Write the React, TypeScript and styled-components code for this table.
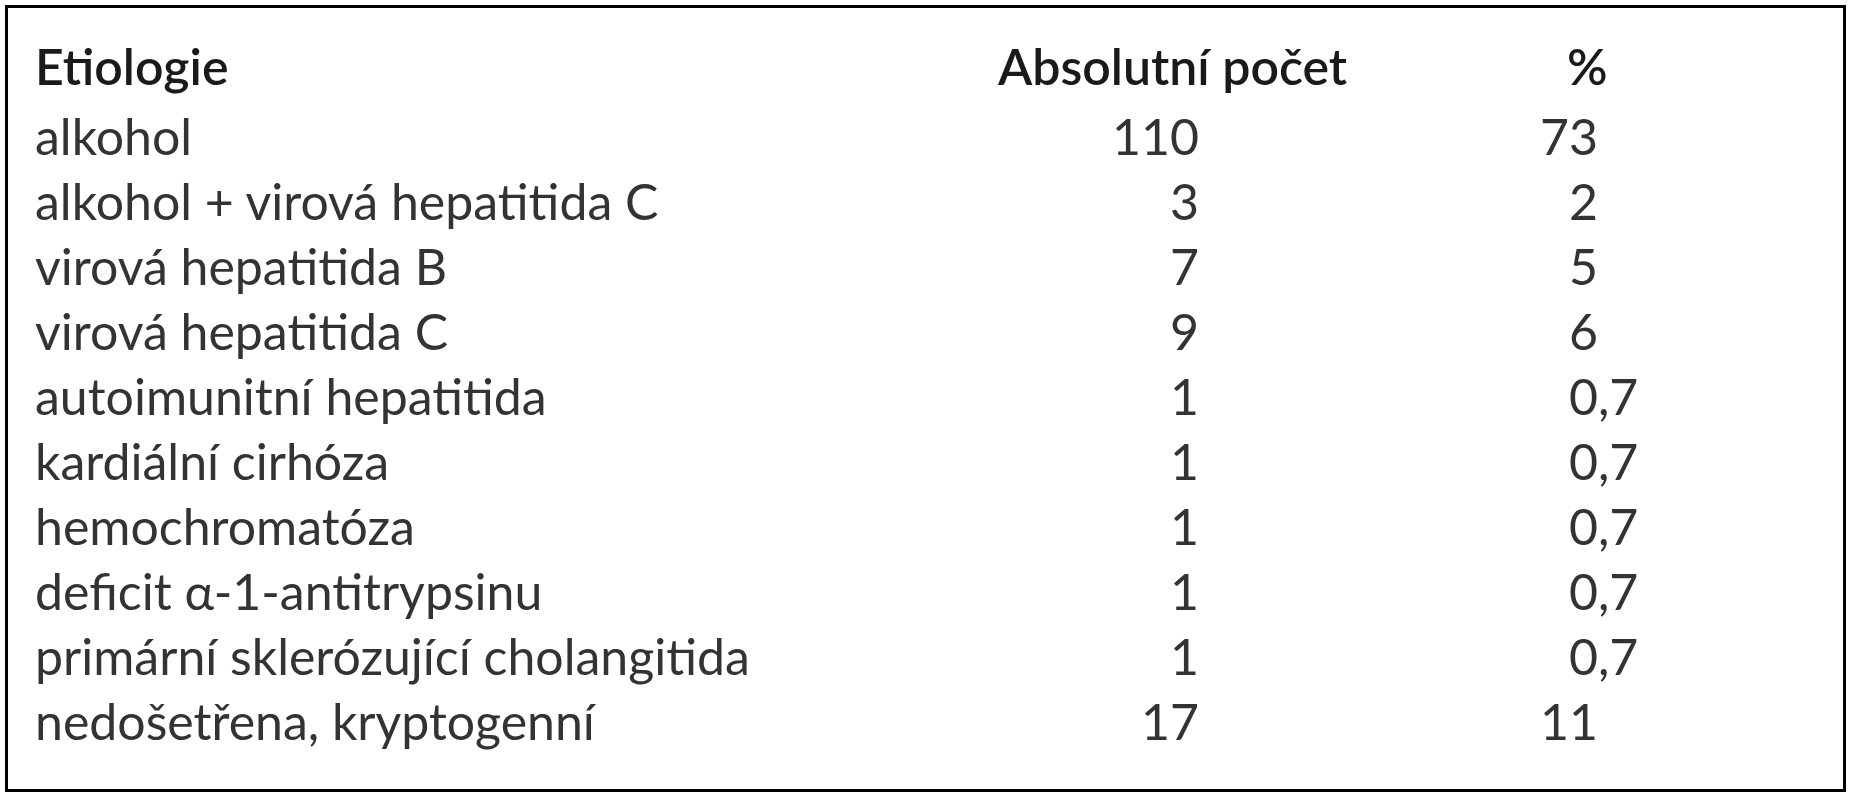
import * as React from "react";
import styled, { createGlobalStyle } from "styled-components";

const GlobalStyle = createGlobalStyle`
  html, body {
    margin: 0;
    padding: 0;
    background: #ffffff;
  }
  body {
    font-family: "Lato", "Open Sans", "DejaVu Sans", sans-serif;
  }
`;

const Page = styled.div`
  padding: 5px 6px 10px 5px;
`;

const Table = styled.div`
  border: 3px solid #000000;
  padding: 26px 0 35px 27px;
  display: flex;
  flex-direction: column;
`;

const Row = styled.div<{ $head?: boolean }>`
  display: grid;
  grid-template-columns: 963px 201px 1fr;
  font-size: 50px;
  line-height: 65px;
  white-space: nowrap;
  color: ${(p) => (p.$head ? "#1a1a1a" : "#333333")};
  font-weight: ${(p) => (p.$head ? 600 : 400)};
  margin-bottom: ${(p) => (p.$head ? "5px" : "0")};
`;

const Label = styled.div``;

const Count = styled.div`
  text-align: right;
`;

const HeadCount = styled.div`
  overflow: visible;
`;

const Percent = styled.div`
  display: flex;
`;

const IntPart = styled.span`
  width: 399px;
  text-align: right;
`;

const FracPart = styled.span``;

const HeadPercent = styled.div`
  padding-left: 368px;
`;

type Item = { label: string; count: string; pct: string };

const rows: Item[] = [
  { label: "alkohol", count: "110", pct: "73" },
  { label: "alkohol + virová hepatitida C", count: "3", pct: "2" },
  { label: "virová hepatitida B", count: "7", pct: "5" },
  { label: "virová hepatitida C", count: "9", pct: "6" },
  { label: "autoimunitní hepatitida", count: "1", pct: "0,7" },
  { label: "kardiální cirhóza", count: "1", pct: "0,7" },
  { label: "hemochromatóza", count: "1", pct: "0,7" },
  { label: "deficit α-1-antitrypsinu", count: "1", pct: "0,7" },
  { label: "primární sklerózující cholangitida", count: "1", pct: "0,7" },
  { label: "nedošetřena, kryptogenní", count: "17", pct: "11" },
];

const App = () => (
  <Page>
    <GlobalStyle />
    <Table>
      <Row $head>
        <Label>Etiologie</Label>
        <HeadCount>Absolutní počet</HeadCount>
        <HeadPercent>%</HeadPercent>
      </Row>
      {rows.map((r) => {
        const [whole, frac] = r.pct.split(",");
        return (
          <Row key={r.label}>
            <Label>{r.label}</Label>
            <Count>{r.count}</Count>
            <Percent>
              <IntPart>{whole}</IntPart>
              {frac !== undefined && <FracPart>,{frac}</FracPart>}
            </Percent>
          </Row>
        );
      })}
    </Table>
  </Page>
);

export default App;
